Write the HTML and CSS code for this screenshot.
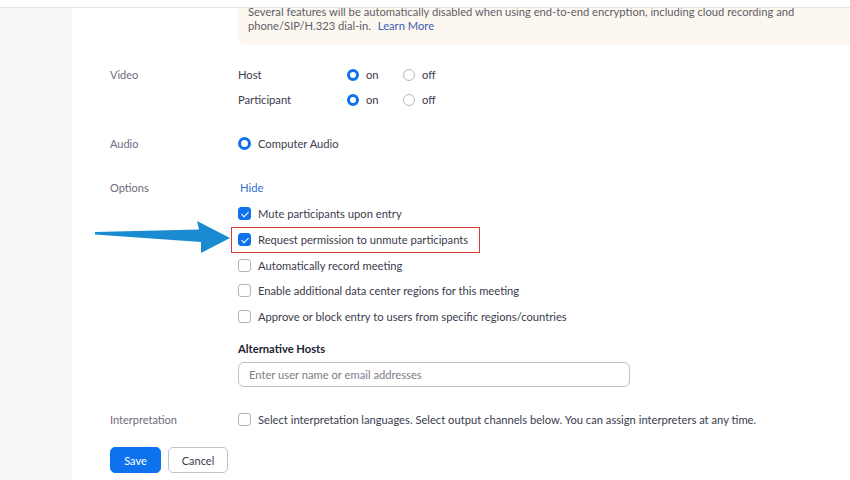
FILE: index.html
```html
<!DOCTYPE html>
<html lang="en">
<head>
<meta charset="utf-8">
<title>Meeting settings</title>
<link rel="stylesheet" href="styles.css">
</head>
<body>
<div class="topbar"></div>
<div class="layout">
  <aside class="sidebar"></aside>
  <main class="main">
    <div class="notice-row">
      <div class="notice">
        Several features will be automatically disabled when using end-to-end encryption, including cloud recording and<br>
        phone/SIP/H.323 dial-in. <a class="learn" href="#">Learn More</a>
      </div>
    </div>

    <section class="section video">
      <div class="label">Video</div>
      <div class="content">
        <div class="line">
          <span class="who">Host</span>
          <span class="opt"><span class="radio on"></span>on</span>
          <span class="opt"><span class="radio"></span>off</span>
        </div>
        <div class="line">
          <span class="who">Participant</span>
          <span class="opt"><span class="radio on"></span>on</span>
          <span class="opt"><span class="radio"></span>off</span>
        </div>
      </div>
    </section>

    <section class="section audio">
      <div class="label">Audio</div>
      <div class="content">
        <div class="line"><span class="radio on big"></span><span class="txt">Computer Audio</span></div>
      </div>
    </section>

    <section class="section options">
      <div class="label">Options</div>
      <div class="content">
        <div class="line"><a class="hide" href="#">Hide</a></div>
        <div class="line chk"><span class="box checked"></span><span class="txt">Mute participants upon entry</span></div>
        <div class="line chk highlighted"><span class="box checked"></span><span class="txt">Request permission to unmute participants</span><span class="redbox"></span>
          <svg class="arrow" width="140" height="36" viewBox="0 0 140 36" aria-hidden="true">
            <path d="M0 11 L104 8.5 L102 0 L135 17 L106 32 L106 21 L0 13.5 Z" fill="#1a8bd1"/>
          </svg>
        </div>
        <div class="line chk"><span class="box"></span><span class="txt">Automatically record meeting</span></div>
        <div class="line chk tight"><span class="box"></span><span class="txt">Enable additional data center regions for this meeting</span></div>
        <div class="line chk"><span class="box"></span><span class="txt">Approve or block entry to users from specific regions/countries</span></div>
        <div class="alt-title">Alternative Hosts</div>
        <div class="input">Enter user name or email addresses</div>
      </div>
    </section>

    <section class="section interp">
      <div class="label">Interpretation</div>
      <div class="content">
        <div class="line chk tight"><span class="box"></span><span class="txt">Select interpretation languages. Select output channels below. You can assign interpreters at any time.</span></div>
      </div>
    </section>

    <div class="actions">
      <button class="btn save">Save</button>
      <button class="btn cancel">Cancel</button>
    </div>
  </main>
</div>
</body>
</html>
```

FILE: styles.css
```css
html, body {
  margin: 0;
  padding: 0;
  background: #ffffff;
  font-family: Lato, "Open Sans", "Liberation Sans", sans-serif;
  font-size: 11.2px;
  color: #3b3b4d;
  overflow: hidden;
}

.topbar {
  position: fixed;
  top: 0;
  left: 0;
  right: 0;
  height: 7px;
  background: #ffffff;
  border-bottom: 1px solid #e6e6ea;
  z-index: 10;
}

.layout {
  display: flex;
  min-height: 480px;
}

.sidebar {
  width: 72px;
  flex: none;
  background: #f7f7f9;
}

.main {
  flex: 1;
  padding-left: 38px;
}

.notice-row {
  padding-left: 128px;
}

.notice {
  background: #fcf8f0;
  border-bottom-left-radius: 6px;
  padding: 5px 0 12px 10px;
  line-height: 14px;
  color: #5e5e6a;
  font-size: 11.2px;
  white-space: nowrap;
}

.learn {
  color: #3c5bb6;
  text-decoration: none;
  margin-left: 4px;
}

.section {
  display: flex;
}

.label {
  width: 128px;
  flex: none;
  color: #6c6c7c;
  font-size: 11px;
  height: 25px;
  line-height: 25px;
}

.content {
  display: flex;
  flex-direction: column;
}

.line {
  display: flex;
  align-items: center;
  height: 25px;
  position: relative;
}

.video { margin-top: 17px; }
.audio { margin-top: 19px; }
.options { margin-top: 19px; }
.interp { margin-top: 20px; }

.who {
  width: 109px;
}

.opt {
  display: flex;
  align-items: center;
  width: 56px;
}

.radio {
  box-sizing: border-box;
  width: 12px;
  height: 12px;
  border-radius: 50%;
  border: 1px solid #b9b9c0;
  background: #fff;
  margin-right: 7px;
  flex: none;
}

.radio.on {
  border: 3.5px solid #0e72ed;
}

.radio.big {
  width: 13px;
  height: 13px;
}

.txt {
  white-space: nowrap;
}

.hide {
  color: #2e6fcf;
  text-decoration: none;
  margin-left: 2px;
}

.line.chk {
  height: 26px;
}

.line.chk.tight {
  height: 25px;
}

.box {
  box-sizing: border-box;
  width: 13px;
  height: 13px;
  border: 1px solid #b4b4bc;
  border-radius: 3px;
  background: #fff;
  margin-right: 7px;
  flex: none;
  position: relative;
}

.box.checked {
  background: #0e72ed;
  border-color: #0e72ed;
}

.box.checked::after {
  content: "";
  position: absolute;
  left: 3.5px;
  top: 2px;
  width: 3px;
  height: 6px;
  border-right: 1.4px solid #fff;
  border-bottom: 1.4px solid #fff;
  transform: rotate(45deg);
}

.redbox {
  position: absolute;
  left: -7px;
  top: 1px;
  width: 249px;
  height: 26px;
  box-sizing: border-box;
  border: 1px solid #d93a35;
}

.arrow {
  position: absolute;
  left: -143px;
  top: -5px;
}

.alt-title {
  font-weight: 700;
  color: #232333;
  margin-top: 12px;
  line-height: 16px;
}

.input {
  box-sizing: border-box;
  margin-top: 5px;
  width: 392px;
  height: 25px;
  border: 1px solid #c2c2ca;
  border-radius: 6px;
  padding-left: 10px;
  line-height: 23px;
  color: #7d7d88;
}

.actions {
  display: flex;
  gap: 7px;
  margin-top: 15px;
}

.btn {
  box-sizing: border-box;
  height: 26px;
  border-radius: 5px;
  font-family: Lato, "Open Sans", "Liberation Sans", sans-serif;
  font-size: 11px;
  cursor: pointer;
}

.save {
  width: 51px;
  background: #0e72ed;
  border: 1px solid #0e72ed;
  color: #fff;
}

.cancel {
  width: 60px;
  background: #fff;
  border: 1px solid #c2c2ca;
  color: #3b3b4d;
}
```
